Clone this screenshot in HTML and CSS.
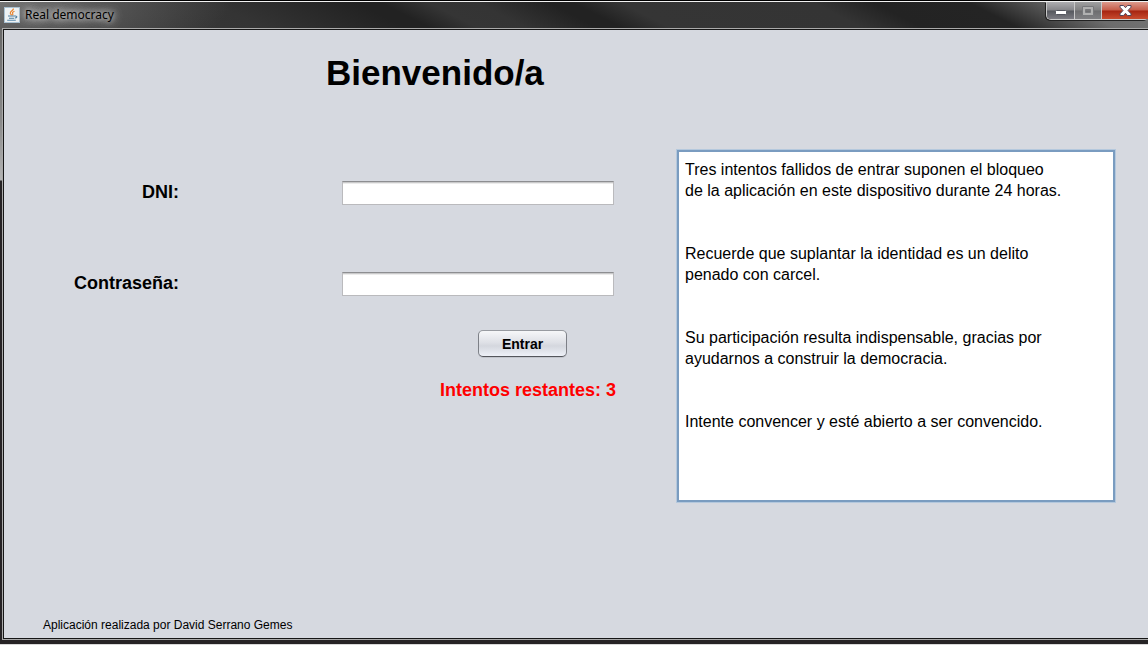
FILE: index.html
```html
<!DOCTYPE html>
<html lang="es">
<head>
<meta charset="utf-8">
<meta name="viewport" content="width=device-width, initial-scale=1">
<title>Real democracy</title>
<link rel="stylesheet" href="styles.css">
</head>
<body>
<div class="window">
  <header class="titlebar">
    <div class="caption">
      <svg class="app-icon" width="16" height="16" viewBox="0 0 16 16" aria-hidden="true">
        <rect x="0.5" y="0.5" width="15" height="15" fill="#eef2f4" stroke="#a9c1d2"/>
        <path d="M9.400 1.500C9.800 3.400 6 4.200 6.300 6.200c.1.900 1 1.400 1.300 2.200M10.500 4.200C8.600 5 8 5.800 8.700 6.600c.5.7.2 1.200-.4 1.700" fill="none" stroke="#e8832d" stroke-width="1.200"/>
        <path d="M4 9h7.500c2 0 1.600 2-.6 2M5 11.200h5.200" fill="none" stroke="#4f7f9f" stroke-width="1.100"/>
        <path d="M3.200 13.300h8.600" fill="none" stroke="#6f9ab8" stroke-width="1.200"/>
      </svg>
      <span class="caption-text">Real democracy</span>
    </div>
    <div class="controls">
      <button class="control minimize" type="button" aria-label="Minimizar">
        <svg width="12" height="5" viewBox="0 0 12 5"><rect x="0.5" y="0.5" width="11" height="4" rx="1" fill="#fff" stroke="#54565f"/></svg>
      </button>
      <button class="control maximize" type="button" aria-label="Maximizar" disabled>
        <svg width="12" height="10" viewBox="0 0 12 10"><path d="M.5.5h11v9H.5zM3.500 3.500h5v3h-5z" fill="#b0b0b0" fill-rule="evenodd" stroke="#77787b"/></svg>
      </button>
      <button class="control close" type="button" aria-label="Cerrar">
        <svg width="13" height="11" viewBox="0 0 13 11"><path d="M1 .5h3.500l2 2.200 2-2.200H12v1.700L9 5.500l3 3.300v1.700H8.500l-2-2.200-2 2.200H1V8.800l3-3.300-3-3.300z" fill="#fff" stroke="#53455a"/></svg>
      </button>
    </div>
  </header>
  <main class="content">
    <h1 class="title">Bienvenido/a</h1>
    <div class="columns">
      <form class="login">
        <label class="label" for="dni">DNI:</label>
        <input class="field" id="dni" type="text">
        <label class="label second" for="password">Contraseña:</label>
        <input class="field second" id="password" type="password">
        <div class="actions">
          <button class="submit" type="button">Entrar</button>
        </div>
        <p class="attempts">Intentos restantes: 3</p>
      </form>
      <textarea class="notice" aria-label="Aviso" rows="16" readonly>Tres intentos fallidos de entrar suponen el bloqueo
de la aplicación en este dispositivo durante 24 horas.


Recuerde que suplantar la identidad es un delito
penado con carcel.


Su participación resulta indispensable, gracias por
ayudarnos a construir la democracia.


Intente convencer y esté abierto a ser convencido.</textarea>
    </div>
    <footer class="credit">Aplicación realizada por David Serrano Gemes</footer>
  </main>
</div>
</body>
</html>
```
FILE: styles.css
```css
* {
  box-sizing: border-box;
}

body {
  margin: 0;
  font-family: "Liberation Sans", Arial, sans-serif;
  color: #000;
}

.window {
  display: flex;
  flex-direction: column;
  min-height: 100vh;
  padding: 0 0 5px 3px;
  border-top: 1px solid #000;
  border-bottom: 1px solid #d8d8d8;
  background: linear-gradient(#5d5d5d 0, #8a8a8a 120px, #b4b4b4 179px, #262325 180px, #262325 100%);
}

.titlebar {
  display: flex;
  justify-content: space-between;
  align-items: flex-start;
  height: 28px;
  margin-left: -3px;
  border-top: 1px solid #f2f2f2;
  background:
    radial-gradient(ellipse 230px 70px at 0 0, rgba(130, 130, 130, 0.8), rgba(110, 110, 110, 0.5) 50%, rgba(60, 60, 60, 0)),
    linear-gradient(27deg, #3c3c3c 0, #343434 22%, #222 34%, #222 36%, #353535 40%, #343434 44%, #222 50%, #222 52%, #353535 56%, #343434 72%, #232323 77%, #242424 85%, #484848 89%, #6c6c6c 93%, #777 100%);
}

.caption {
  display: flex;
  align-items: center;
  padding: 5px 0 0 4px;
}

.app-icon {
  display: block;
}

.caption-text {
  padding-left: 5px;
  font: 12px/16px "Noto Sans", "Open Sans", sans-serif;
  text-shadow: 0 0 5px #ccc, 0 0 8px #bbb, 0 0 12px #aaa, 0 0 12px #aaa;
}

.controls {
  display: flex;
  border: 1px solid #c9c9c9;
  border-width: 0 0 1px 1px;
  border-radius: 0 0 4px 5px;
  box-shadow: -1px 1px 0 #222;
}

.control {
  display: flex;
  justify-content: center;
  align-items: center;
  width: 28px;
  height: 17px;
  padding: 0;
  border: 0;
  border-right: 1px solid #c9c9c9;
  background: linear-gradient(#adadb0 0, #858589 48%, #55575d 52%, #7b7b82 100%);
}

.minimize {
  padding-top: 4px;
  border-bottom-left-radius: 4px;
}

.maximize {
  width: 27px;
  background: linear-gradient(#a0a0a1 0, #808081 48%, #6c6c6e 52%, #808083 100%);
}

.close {
  width: 46px;
  border-right: 0;
  background: linear-gradient(#dc9a8d 0, #c65c48 48%, #a52411 52%, #c84b2e 100%);
}

.content {
  display: flex;
  flex: 1;
  flex-direction: column;
  padding: 22px 33px 4px 0;
  border: 1px solid #161616;
  border-right: 0;
  background: #d6d9e0;
  outline: 1px solid #aaa;
}

.title {
  margin: 0 0 56px;
  padding-left: 322px;
  font-size: 35px;
  line-height: 42px;
}

.columns {
  display: grid;
  grid-template-columns: minmax(0, 610fr) minmax(0, 438fr);
  gap: 63px;
  align-items: start;
}

.login {
  display: grid;
  grid-template-columns: 175px minmax(0, 1fr);
  column-gap: 163px;
  align-items: start;
  padding-top: 31px;
}

.label {
  font-size: 18px;
  line-height: 22px;
  font-weight: bold;
  text-align: right;
}

.field {
  width: 100%;
  height: 24px;
  padding: 2px 6px;
  border: 1px solid #bababd;
  border-top-color: #8d8e91;
  border-radius: 0;
  background: #fff;
  box-shadow: inset 0 1px 0 #c9c9ca, inset 0 2px 0 #ececec;
  font: 16px/18px "Liberation Sans", Arial, sans-serif;
}

.second {
  margin-top: 67px;
}

.actions {
  grid-column: 2;
  display: flex;
  justify-content: flex-end;
  padding: 34px 47px 0 0;
}

.submit {
  width: 89px;
  height: 27px;
  padding: 0;
  border: 1px solid #7d8087;
  border-top-color: #989ba1;
  border-bottom-color: #54565c;
  border-radius: 5px;
  background: linear-gradient(#f6f7f9 0, #dfe1e7 45%, #d4d7de 60%, #eef1f8 100%);
  box-shadow: 0 1px 0 #c2c5cc;
  font: bold 14px/18px "Liberation Sans", Arial, sans-serif;
  color: #000;
}

.attempts {
  grid-column: 2;
  margin: 21px -2px 0 0;
  font-size: 18px;
  line-height: 24px;
  font-weight: bold;
  text-align: right;
  color: #f00;
}

.notice {
  display: block;
  width: 100%;
  padding: 7px 6px 5px;
  border: 2px solid #7a9cc0;
  border-radius: 0;
  box-shadow: 0 0 0 1px #b4c8dd;
  background: #fff;
  font: 16px/21px "Liberation Sans", Arial, sans-serif;
  color: #000;
  resize: none;
  outline: 0;
  overflow: auto;
}

.credit {
  margin-top: auto;
  padding-left: 39px;
  font-size: 12px;
  line-height: 18px;
}
```
